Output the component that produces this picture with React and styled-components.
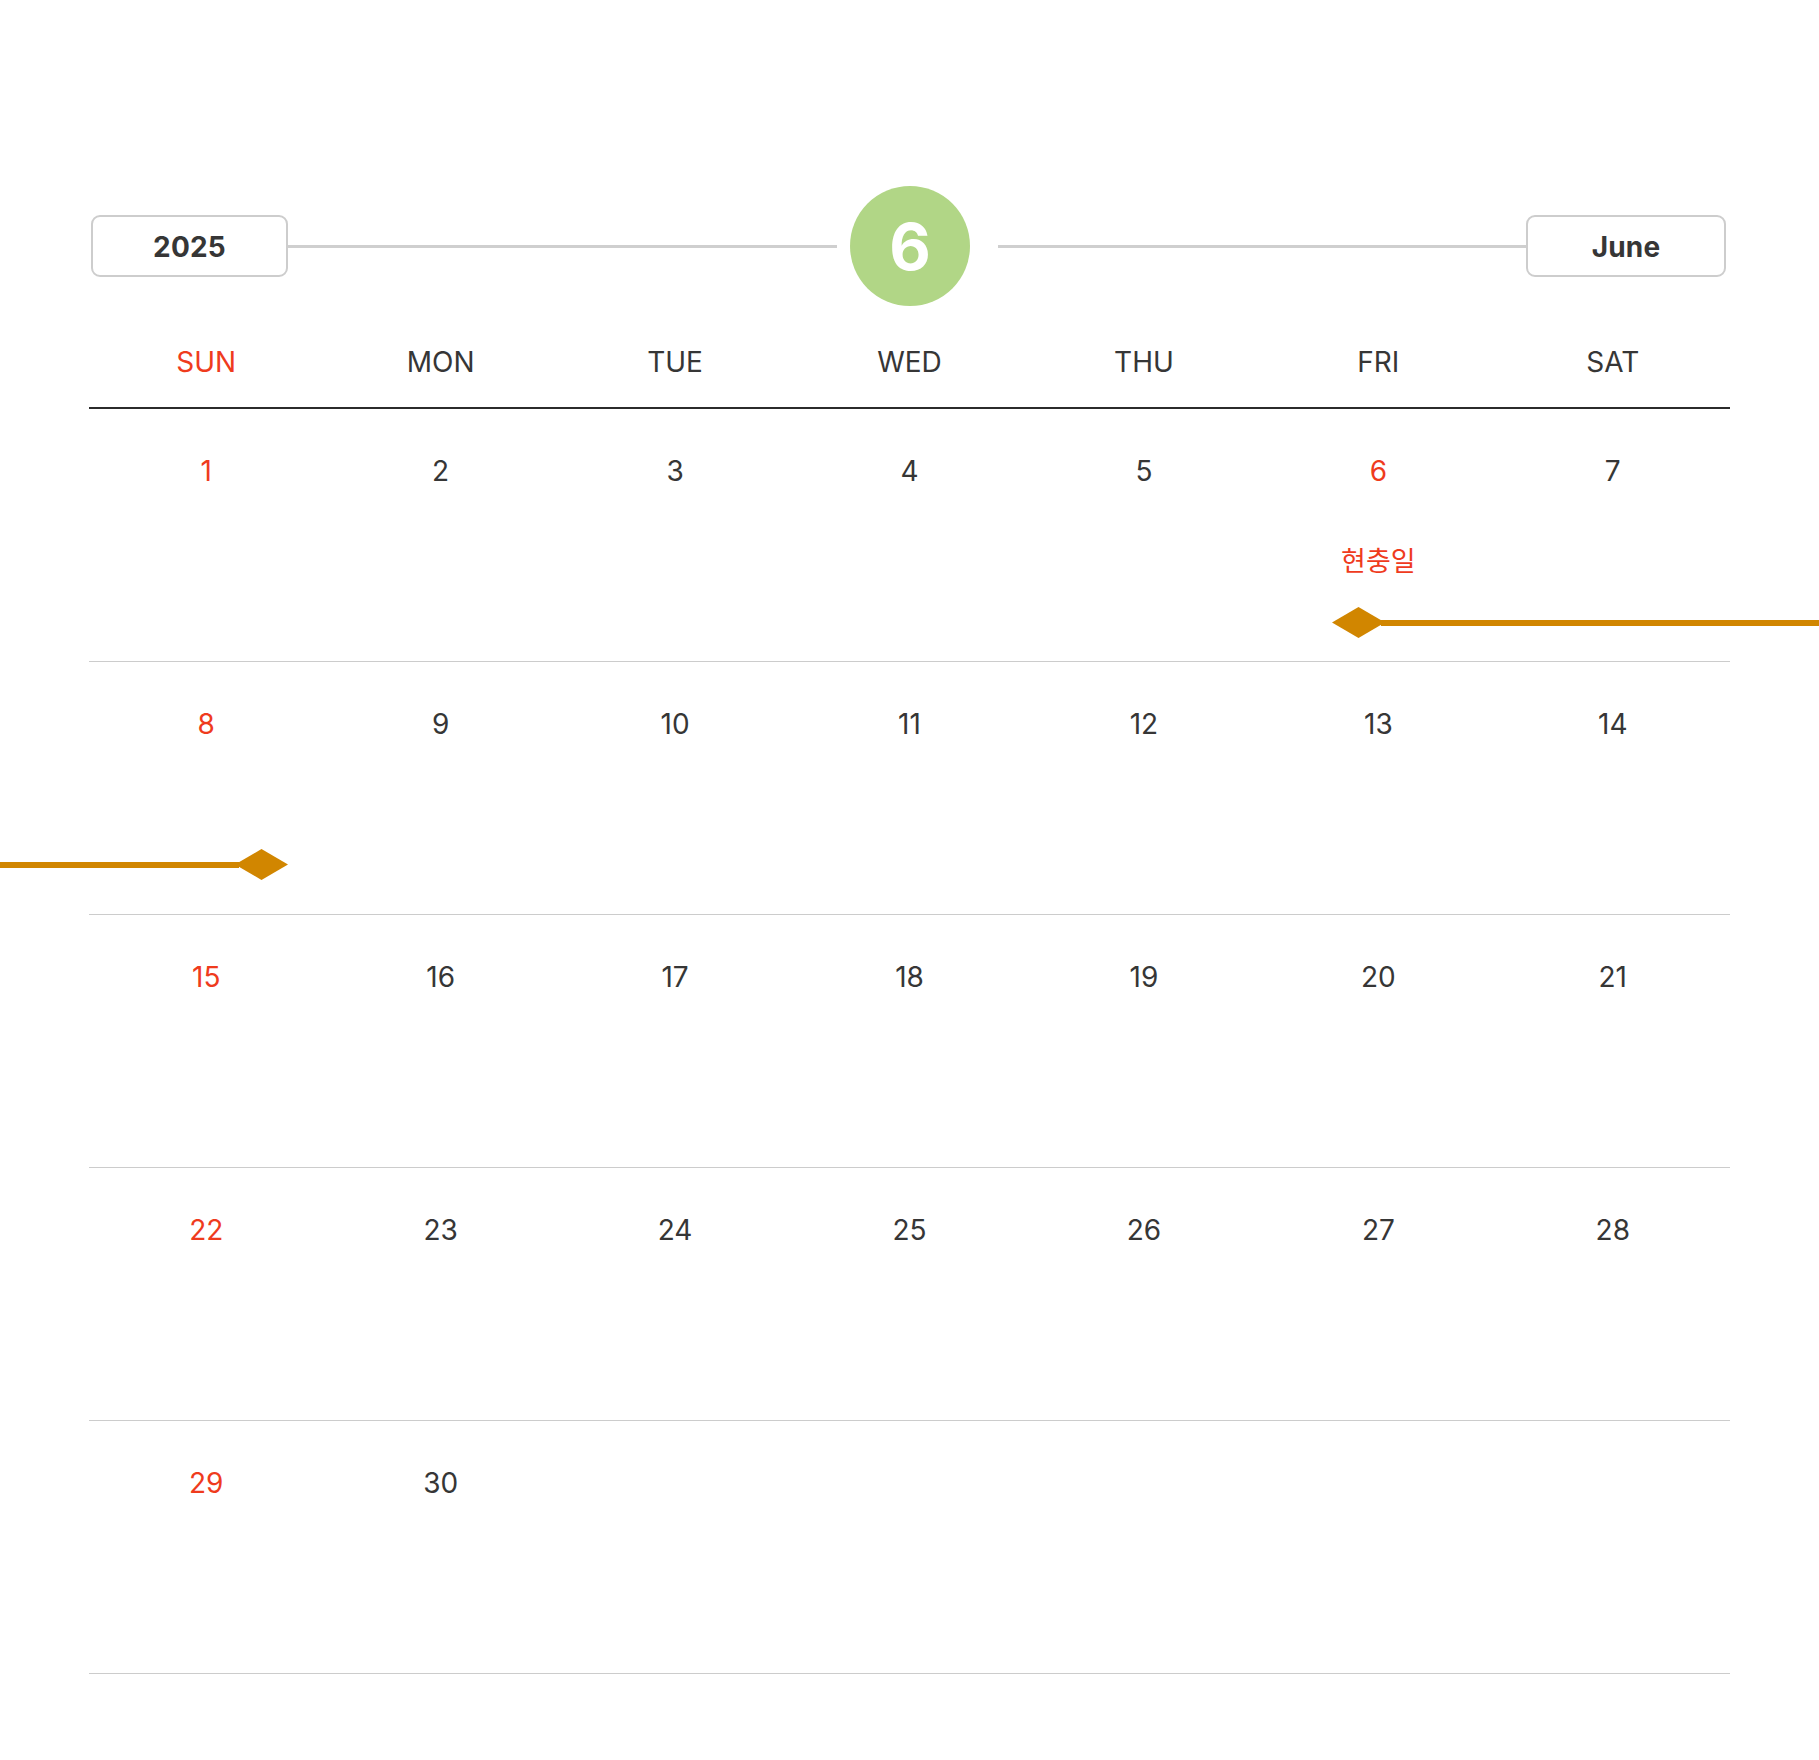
import React from "react";
import styled, { createGlobalStyle } from "styled-components";

const Global = createGlobalStyle`
  html, body { margin: 0; padding: 0; background: #ffffff; overflow-x: hidden; }
  body { font-family: Inter, "Noto Sans", "Noto Sans CJK KR", sans-serif; color: #333333; }
`;

const RED = "#ef3b1d";
const DARK = "#363636";
const ORANGE = "#d18600";

const Page = styled.div`
  width: 1641px;
  padding: 186px 0 0 89px;
`;

const TopBar = styled.div`
  display: flex;
  align-items: center;
  height: 120px;
  padding: 0 4px 0 2px;
`;

const LabelBox = styled.div`
  flex: 0 0 ${(p) => p.$w}px;
  box-sizing: border-box;
  height: 62px;
  border: 2px solid #cdcdcd;
  border-radius: 9px;
  display: flex;
  align-items: center;
  justify-content: center;
  padding-top: 2px;
  font-size: 28px;
  font-weight: 700;
  color: ${DARK};
  letter-spacing: 0.2px;
`;

const Rule = styled.div`
  flex: ${(p) => p.$grow} 1 0;
  height: 3px;
  background: #cfcfcf;
`;

const MonthCircle = styled.div`
  flex: 0 0 120px;
  height: 120px;
  margin: 0 28px 0 13px;
  border-radius: 50%;
  background: #b1d686;
  color: #ffffff;
  font-size: 64px;
  font-weight: 700;
  display: flex;
  align-items: center;
  justify-content: center;
`;

const WeekHeader = styled.div`
  display: grid;
  grid-template-columns: repeat(7, 1fr);
  padding: 39px 0 28px;
  border-bottom: 2px solid #2b2b2b;
`;

const WeekDay = styled.div`
  text-align: center;
  font-size: 28px;
  line-height: 34px;
  color: ${(p) => (p.$red ? RED : DARK)};
`;

const WeekRow = styled.div`
  position: relative;
  display: grid;
  grid-template-columns: repeat(7, 1fr);
  height: 252px;
  border-bottom: 1px solid #cccccc;
`;

const DayCell = styled.div`
  display: flex;
  flex-direction: column;
  align-items: center;
  padding-top: 45px;
`;

const DayNum = styled.div`
  font-size: 28px;
  line-height: 34px;
  color: ${(p) => (p.$red ? RED : DARK)};
`;

const Holiday = styled.div`
  margin-top: 55px;
  font-family: "Noto Sans CJK KR", "Noto Sans", sans-serif;
  font-size: 27px;
  line-height: 34px;
  color: ${RED};
`;

const EventBar = styled.div`
  position: absolute;
  top: ${(p) => p.$top}px;
  left: ${(p) => p.$left}px;
  width: ${(p) => p.$width}px;
  height: 31px;
  display: flex;
  align-items: center;
`;

const Track = styled.div`
  flex: 1 1 auto;
  height: 6px;
  background: ${ORANGE};
  margin: ${(p) => (p.$side === "right" ? "0 0 0 -4px" : "0 -4px 0 0")};
`;

const Diamond = () => (
  <svg width="53" height="31" viewBox="0 0 53 31" style={{ flex: "0 0 auto", position: "relative", zIndex: 1 }}>
    <polygon points="0,15.5 26.5,0 53,15.5 26.5,31" fill={ORANGE} />
  </svg>
);

const days = ["SUN", "MON", "TUE", "WED", "THU", "FRI", "SAT"];

const weeks = [
  [1, 2, 3, 4, 5, 6, 7],
  [8, 9, 10, 11, 12, 13, 14],
  [15, 16, 17, 18, 19, 20, 21],
  [22, 23, 24, 25, 26, 27, 28],
  [29, 30, null, null, null, null, null],
];

const holidays = { 6: "현충일" };

export default function App() {
  return (
    <>
      <Global />
      <Page>
        <TopBar>
          <LabelBox $w={197}>2025</LabelBox>
          <Rule $grow={549} />
          <MonthCircle>6</MonthCircle>
          <Rule $grow={528} />
          <LabelBox $w={200}>June</LabelBox>
        </TopBar>
        <WeekHeader>
          {days.map((d, i) => (
            <WeekDay key={d} $red={i === 0}>
              {d}
            </WeekDay>
          ))}
        </WeekHeader>
        {weeks.map((w, wi) => (
          <WeekRow key={wi}>
            {w.map((d, di) => (
              <DayCell key={di}>
                {d && <DayNum $red={di === 0 || !!holidays[d]}>{d}</DayNum>}
                {d && holidays[d] && <Holiday>{holidays[d]}</Holiday>}
              </DayCell>
            ))}
            {wi === 0 && (
              <EventBar $top={198} $left={1243} $width={487}>
                <Diamond />
                <Track $side="right" />
              </EventBar>
            )}
            {wi === 1 && (
              <EventBar $top={187} $left={-89} $width={288}>
                <Track $side="left" />
                <Diamond />
              </EventBar>
            )}
          </WeekRow>
        ))}
      </Page>
    </>
  );
}
